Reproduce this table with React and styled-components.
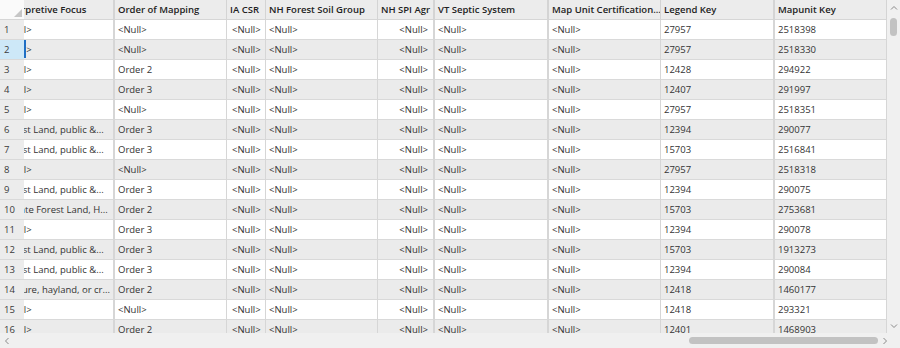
import React, { useLayoutEffect, useRef } from "react";
import styled, { createGlobalStyle } from "styled-components";

const Global = createGlobalStyle`
  html, body { margin: 0; padding: 0; background: #f0f0f0; }
  body { font-family: "Open Sans", "Noto Sans", sans-serif; }
`;

const SCROLL_X = 24;

const COLS = [
  { key: "focus", title: "Interpretive Focus", width: 91 + SCROLL_X, border: 2 },
  { key: "order", title: "Order of Mapping", width: 112, border: 1 },
  { key: "ia", title: "IA CSR", width: 39, border: 1, right: true },
  { key: "nhf", title: "NH Forest Soil Group", width: 112, border: 1 },
  { key: "nhs", title: "NH SPI Agr", width: 57, border: 2, right: true },
  { key: "vt", title: "VT Septic System", width: 114, border: 2 },
  { key: "cert", title: "Map Unit Certification...", width: 112, border: 1 },
  { key: "legend", title: "Legend Key", width: 114, border: 2 },
  { key: "mukey", title: "Mapunit Key", width: 112, border: 1 },
];

const N = "<Null>";
const FL = "Forest Land, public &...";
const rowsData = [
  [N, N, "27957", "2518398"],
  [N, N, "27957", "2518330"],
  [N, "Order 2", "12428", "294922"],
  [N, "Order 3", "12407", "291997"],
  [N, N, "27957", "2518351"],
  [FL, "Order 3", "12394", "290077"],
  [FL, "Order 3", "15703", "2516841"],
  [N, N, "27957", "2518318"],
  [FL, "Order 3", "12394", "290075"],
  ["Private Forest Land, H...", "Order 2", "15703", "2753681"],
  [N, "Order 3", "12394", "290078"],
  [FL, "Order 3", "15703", "1913273"],
  [FL, "Order 3", "12394", "290084"],
  ["Pasture, hayland, or cr...", "Order 2", "12418", "1460177"],
  [N, N, "12418", "293321"],
  [N, "Order 2", "12401", "1468903"],
];

const rows = rowsData.map(([focus, order, legend, mukey]) => ({
  focus, order, ia: N, nhf: N, nhs: N, vt: N, cert: N, legend, mukey,
}));

const Frame = styled.div`
  width: 900px;
  height: 348px;
  display: flex;
  flex-direction: column;
  background: #f0f0f0;
  overflow: hidden;
`;

const Upper = styled.div`
  display: flex;
  height: 333px;
`;

const RowHeaderCol = styled.div`
  width: 24px;
  flex: none;
  display: flex;
  flex-direction: column;
  overflow: hidden;
`;

const Corner = styled.div`
  height: 20px;
  flex: none;
  box-sizing: border-box;
  background: #fafafa;
  border-bottom: 1px solid #d6d6d6;
  display: flex;
  align-items: flex-end;
  justify-content: flex-end;
  padding: 0 2px 2px 0;
`;

const RowNum = styled.div`
  height: 20px;
  flex: none;
  box-sizing: border-box;
  border-bottom: 1px solid #d9d9d9;
  background: ${(p) => (p.$selected ? "#cde8f8" : "#ececec")};
  color: #3a3a3a;
  font-size: 9.5px;
  line-height: 19px;
  padding-left: 4px;
`;

const DataViewport = styled.div`
  flex: 1;
  overflow: hidden;
  background: #f0f0f0;
`;

const Table = styled.div`
  display: grid;
  grid-template-columns: ${COLS.map((c) => c.width + "px").join(" ")};
  width: max-content;
`;

const HeaderCell = styled.div`
  height: 20px;
  box-sizing: border-box;
  background: #ececec;
  border-right: ${(p) => p.$border}px solid #d4d4d4;
  border-bottom: 1px solid #d6d6d6;
  color: #222;
  font-weight: 600;
  font-size: 9.5px;
  line-height: 19px;
  padding: 0 3px;
  white-space: nowrap;
  overflow: hidden;
`;

const Cell = styled.div`
  position: relative;
  height: 20px;
  box-sizing: border-box;
  background: ${(p) => (p.$alt ? "#ebebeb" : "#ffffff")};
  border-right: ${(p) => p.$border}px solid #d6d6d6;
  border-bottom: 1px solid #d9d9d9;
  color: #333;
  font-size: 9.5px;
  line-height: 19px;
  padding: 0 ${(p) => (p.$right ? "5px" : "3px")};
  text-align: ${(p) => (p.$right ? "right" : "left")};
  white-space: nowrap;
  overflow: hidden;
`;

const CurrentMark = styled.span`
  position: absolute;
  left: ${SCROLL_X}px;
  top: 0;
  bottom: 1px;
  width: 2px;
  background: #1f6fc4;
`;

const VScroll = styled.div`
  width: 13px;
  flex: none;
  display: flex;
  flex-direction: column;
  align-items: center;
  background: #f0f0f0;
`;

const ArrowBox = styled.div`
  width: 13px;
  height: ${(p) => p.$h || 14}px;
  flex: none;
  display: flex;
  align-items: center;
  justify-content: center;
`;

const VTrack = styled.div`
  flex: 1;
  width: 100%;
  display: flex;
  justify-content: center;
  padding-top: 3px;
`;

const VThumb = styled.div`
  width: 7px;
  height: 18px;
  border-radius: 4px;
  background: #c2c2c2;
`;

const HScroll = styled.div`
  height: 15px;
  display: flex;
  align-items: center;
  background: #f0f0f0;
`;

const HTrack = styled.div`
  flex: 1;
  height: 100%;
  display: flex;
  align-items: center;
  padding-left: 676px;
`;

const HThumb = styled.div`
  width: 189px;
  height: 7px;
  border-radius: 4px;
  background: #c2c2c2;
`;

const Chevron = ({ dir }) => {
  const pts = {
    up: "1,4.5 4,1.5 7,4.5",
    down: "1,1.5 4,4.5 7,1.5",
    left: "4.5,1 1.5,4 4.5,7",
    right: "1.5,1 4.5,4 1.5,7",
  }[dir];
  const vertical = dir === "up" || dir === "down";
  return (
    <svg width={vertical ? 8 : 6} height={vertical ? 6 : 8} viewBox={vertical ? "0 0 8 6" : "0 0 6 8"}>
      <polyline points={pts} fill="none" stroke="#8a8a8a" strokeWidth="1" />
    </svg>
  );
};

export default function App() {
  const vpRef = useRef(null);
  useLayoutEffect(() => {
    if (vpRef.current) vpRef.current.scrollLeft = SCROLL_X;
  }, []);
  return (
    <>
      <Global />
      <Frame>
        <Upper>
          <RowHeaderCol>
            <Corner>
              <svg width="8" height="8" viewBox="0 0 8 8">
                <polygon points="8,0 8,8 0,8" fill="#c6c6c6" />
              </svg>
            </Corner>
            {rows.map((_, i) => (
              <RowNum key={i} $selected={i === 1}>{i + 1}</RowNum>
            ))}
          </RowHeaderCol>
          <DataViewport ref={vpRef}>
            <Table>
              {COLS.map((c) => (
                <HeaderCell key={c.key} $border={c.border}>{c.title}</HeaderCell>
              ))}
              {rows.map((r, i) =>
                COLS.map((c, j) => (
                  <Cell key={i + "-" + c.key} $alt={i % 2 === 1} $border={c.border} $right={c.right}>
                    {i === 1 && j === 0 && <CurrentMark />}
                    {r[c.key]}
                  </Cell>
                ))
              )}
            </Table>
          </DataViewport>
          <VScroll>
            <ArrowBox $h={15}><Chevron dir="up" /></ArrowBox>
            <VTrack><VThumb /></VTrack>
            <ArrowBox $h={14}><Chevron dir="down" /></ArrowBox>
          </VScroll>
        </Upper>
        <HScroll>
          <ArrowBox $h={15}><Chevron dir="left" /></ArrowBox>
          <HTrack><HThumb /></HTrack>
          <ArrowBox $h={15}><Chevron dir="right" /></ArrowBox>
          <ArrowBox $h={15} />
        </HScroll>
      </Frame>
    </>
  );
}
